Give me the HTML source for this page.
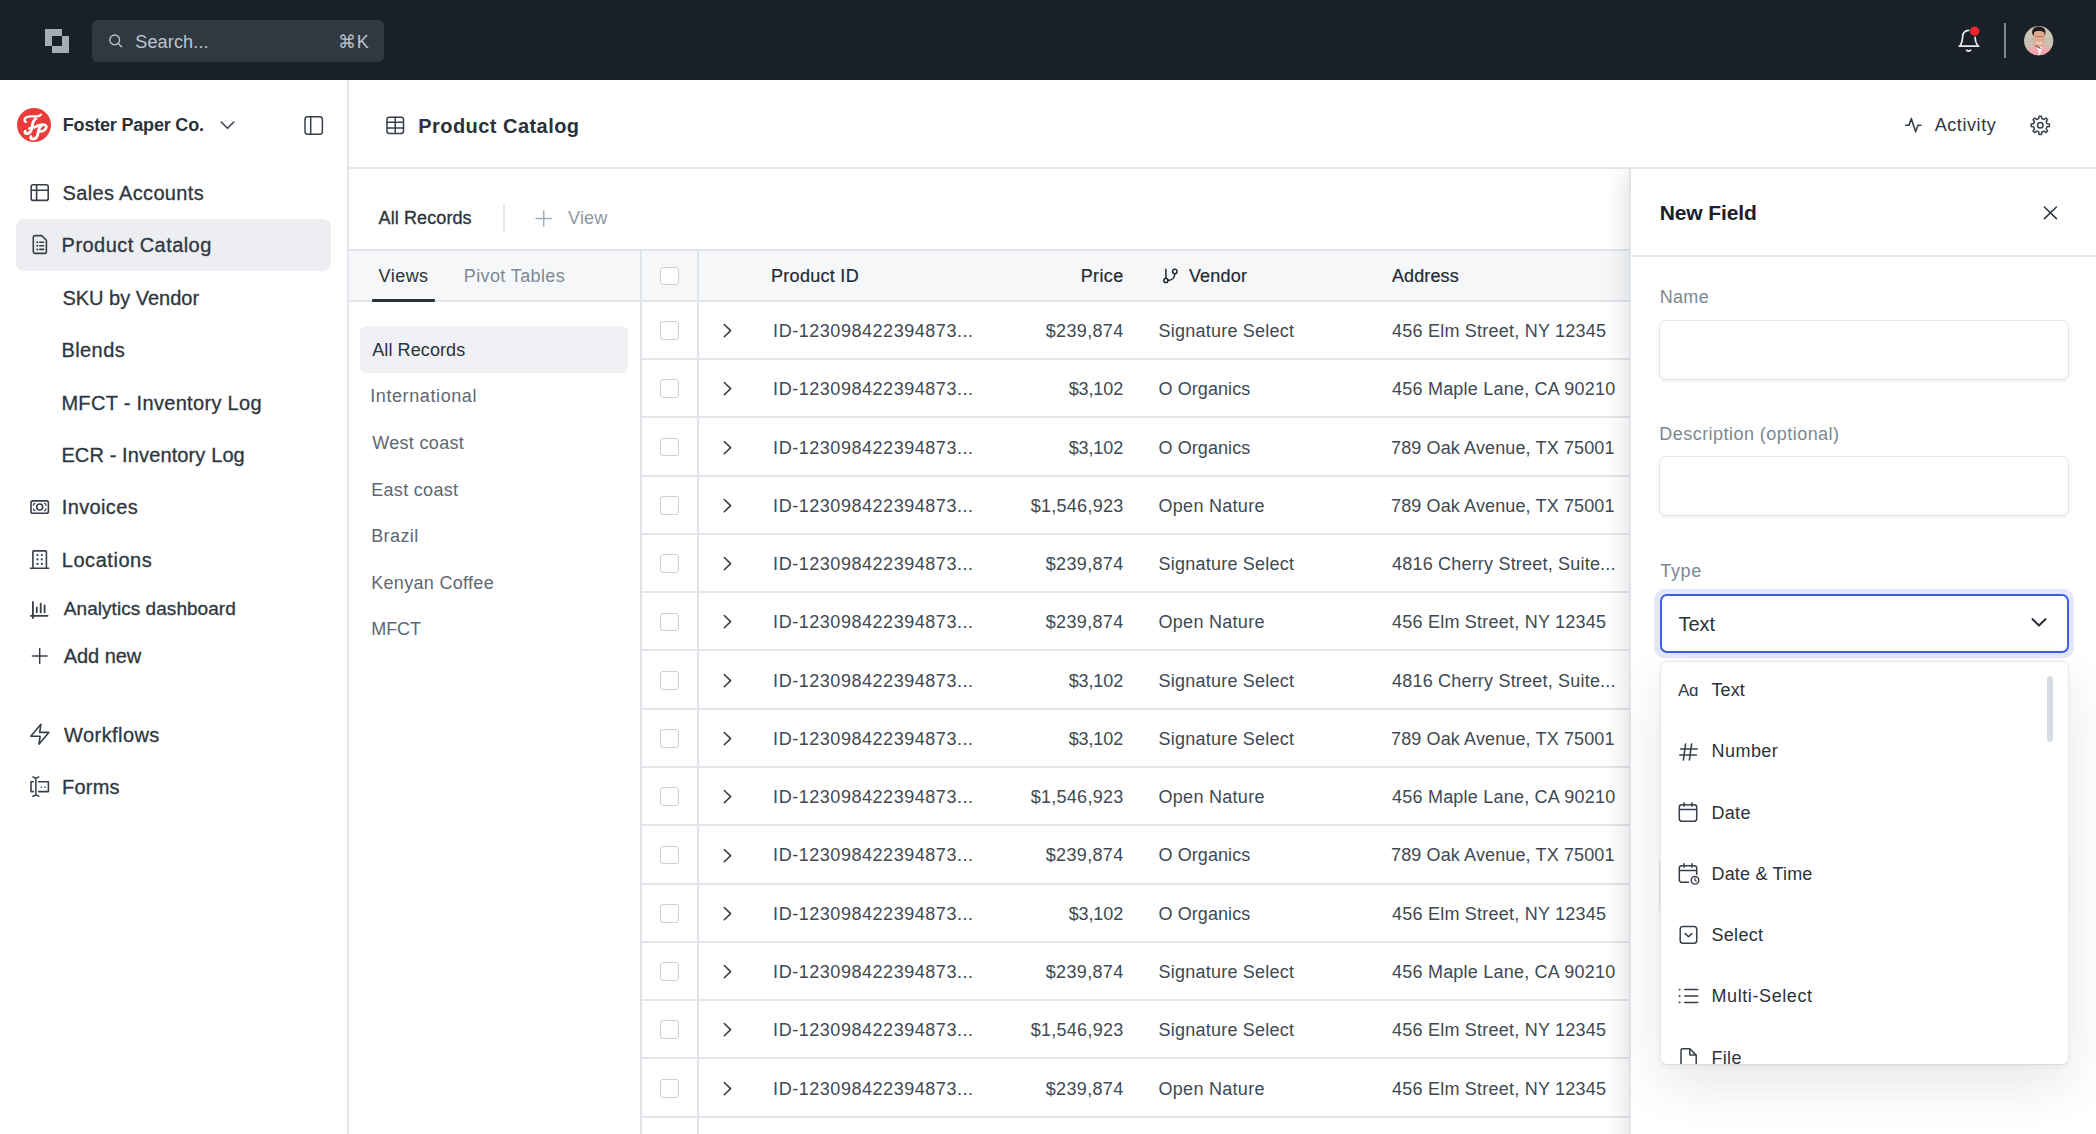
<!DOCTYPE html>
<html><head><meta charset="utf-8"><title>Product Catalog</title>
<style>
html,body{margin:0;padding:0;}
body{width:2096px;height:1134px;overflow:hidden;position:relative;background:#fff;font-family:"Liberation Sans", sans-serif;}
.t{position:absolute;line-height:1;white-space:nowrap;}
.b{position:absolute;}
svg{position:absolute;overflow:visible;}
</style></head><body>
<div class="b" style="left:0.00px;top:0.00px;width:2096.00px;height:80.00px;background:#1a2027;"></div>
<svg style="left:45px;top:29px;" width="24" height="24" viewBox="0 0 24 24" fill="none"><path fill="#a3adb8" fill-rule="evenodd" d="M0 0H17V17H0Z M7 7H24V24H7Z"/></svg>
<div class="b" style="left:92.00px;top:20.00px;width:292.00px;height:42.00px;background:#303942;border-radius:6px;"></div>
<svg style="left:107px;top:32px;" width="18" height="18" viewBox="0 0 18 18" fill="none"><circle cx="7.7" cy="7.9" r="4.9" stroke="#b6c0ca" stroke-width="1.4"/><path d="M11.3 11.5L14.6 14.8" stroke="#b6c0ca" stroke-width="1.4" stroke-linecap="round"/></svg>
<div class="t" style="top:32.66px;font-size:18px;color:#bcc4cc;letter-spacing:0.15px;left:135.30px;">Search...</div>
<div class="t" style="top:33.06px;font-size:18px;color:#bcc4cc;letter-spacing:0.5px;right:1726.80px;">&#8984;K</div>
<svg style="left:1956px;top:27px;" width="26" height="28" viewBox="0 0 26 28" fill="none"><path d="M3.2 19.1H22.7M4.2 19C5.8 16 6.6 13 6.7 9.5C6.9 5.8 9.3 3.6 12.7 3.4M19 10.3C19.1 13.5 20 16.5 21.9 19" stroke="#e6e9ec" stroke-width="1.7" stroke-linecap="round" stroke-linejoin="round"/><path d="M10.5 23.2Q12.6 25.2 14.7 23.2" stroke="#e6e9ec" stroke-width="1.6" stroke-linecap="round"/><circle cx="18.7" cy="4.3" r="4.7" fill="#ea2530"/></svg>
<div class="b" style="left:2003.50px;top:23.00px;width:2.00px;height:35.00px;background:#7d8894;"></div>
<svg style="left:2024px;top:26px;" width="30" height="30" viewBox="0 0 30 30" fill="none"><defs><clipPath id="av"><circle cx="14.7" cy="14.7" r="14.6"/></clipPath></defs><g clip-path="url(#av)"><rect width="30" height="30" fill="#cdc6b8"/><path d="M0 13H30M0 16H30M0 19H30M0 22H30" stroke="#bab3a5" stroke-width="0.7"/><path d="M8 7C8 2 12 0 15.5 0.5C19.5 1 22 3 21.5 7.5L20.5 10L9.5 10Z" fill="#221d1a"/><path d="M10 6.5C12 4.5 18.5 4.5 20.5 7L20.8 14C20.5 19 17.5 21.5 15 21.5C12.5 21.5 9.6 19 9.4 14Z" fill="#e2aa93"/><path d="M11 10.5H19.5" stroke="#9a6e62" stroke-width="0.8"/><path d="M12.5 16.5Q15 18.5 17.5 16.5" stroke="#f4f1ee" stroke-width="1.1" stroke-linecap="round"/><path d="M1 31C2 24 7 20.5 11.5 19.5L15 23L19 19.5C24 20.5 28.5 24 29.5 31Z" fill="#f2a6ad"/><path d="M13 21.5L15.5 30L18.5 21Z" fill="#eef1f0"/><path d="M11.5 19.5L16.5 22.5" stroke="#7a2e2e" stroke-width="1"/></g></svg>
<div class="b" style="left:347.00px;top:80.00px;width:2.00px;height:1054.00px;background:#e3e7ed;"></div>
<div class="b" style="left:17px;top:108px;width:34px;height:34px;border-radius:50%;background:#eb3c3c;"></div>
<svg style="left:17px;top:108px;" width="34" height="34" viewBox="0 0 34 34" fill="none"><g stroke="#fff" stroke-linecap="round" stroke-linejoin="round" fill="none"><path d="M8.8 13.8C6.6 13 7.2 9.2 11.6 8.6C15 8.1 18.3 8.9 21.5 8.1C22.6 7.8 23.4 7.3 24 6.6" stroke-width="2.3"/><path d="M18.8 10.8C16.6 11.9 15.6 15.6 15.1 18.8C14.6 22.2 13.4 25.2 10.4 25.6C8.4 25.8 7.3 24.6 8.3 23.2" stroke-width="2.9"/><path d="M12 20.4L15.8 19.6" stroke-width="2.2"/><path d="M24.6 17.6C22.2 18.6 21.6 21.9 21.1 25C20.6 28.6 19.2 31 15.8 31.1C13.9 31.2 13.2 29.8 14.1 28.6" stroke-width="2.9"/><path d="M17.6 19.4C21.4 16.8 27 15.4 28.9 17.6C30.4 19.8 27.4 24.2 21.8 23.4" stroke-width="2.6"/></g></svg>
<div class="t" style="top:115.76px;font-size:18px;color:#2a323a;font-weight:700;letter-spacing:-0.19px;left:62.80px;">Foster Paper Co.</div>
<svg style="left:219px;top:119px;" width="17" height="12" viewBox="0 0 17 12" fill="none"><path d="M2.2 3L8.5 9.3L14.8 3" stroke="#3a434c" stroke-width="1.6" stroke-linecap="round" stroke-linejoin="round"/></svg>
<svg style="left:302px;top:114px;" width="23" height="23" viewBox="0 0 23 23" fill="none"><rect x="3" y="2.8" width="17.4" height="17.4" rx="2.6" stroke="#37404a" stroke-width="1.5" stroke-linecap="round" stroke-linejoin="round"/><path d="M8.7 2.8V20.2" stroke="#37404a" stroke-width="1.5" stroke-linecap="round" stroke-linejoin="round"/></svg>
<svg style="left:28px;top:181px;" width="24" height="23" viewBox="0 0 24 23" fill="none"><rect x="3.2" y="3.8" width="17" height="15.6" rx="2" stroke="#37404a" stroke-width="1.6" stroke-linecap="round" stroke-linejoin="round"/><path d="M3.2 9.3H20.2M8.6 3.8V19.4" stroke="#37404a" stroke-width="1.6" stroke-linecap="round" stroke-linejoin="round"/></svg>
<div class="b" style="left:16.00px;top:219.00px;width:315.00px;height:52.00px;background:#eceef1;border-radius:8px;"></div>
<svg style="left:30px;top:232px;" width="20" height="25" viewBox="0 0 20 25" fill="none"><path d="M3.3 5.6C3.3 4.5 4.2 3.6 5.3 3.6H11.7L16.4 8.3V19.4C16.4 20.5 15.5 21.4 14.4 21.4H5.3C4.2 21.4 3.3 20.5 3.3 19.4Z" stroke="#37404a" stroke-width="1.6" stroke-linecap="round" stroke-linejoin="round"/><path d="M7.2 10.3h0.1M7.2 13.8h0.1M7.2 17.4h0.1" stroke="#37404a" stroke-width="2" stroke-linecap="round" stroke-linejoin="round"/><path d="M9.8 10.3H13.6M9.8 13.8H13.6M9.8 17.4H13.6" stroke="#37404a" stroke-width="1.6" stroke-linecap="round" stroke-linejoin="round"/></svg>
<div class="t" style="top:183.07px;font-size:20px;color:#2e3740;letter-spacing:0.33px;left:62.60px;-webkit-text-stroke:0.3px #2e3740;">Sales Accounts</div>
<div class="t" style="top:235.37px;font-size:20px;color:#2e3740;letter-spacing:0.45px;left:61.60px;-webkit-text-stroke:0.3px #2e3740;">Product Catalog</div>
<div class="t" style="top:287.77px;font-size:20px;color:#2e3740;left:62.40px;-webkit-text-stroke:0.3px #2e3740;">SKU by Vendor</div>
<div class="t" style="top:340.17px;font-size:20px;color:#2e3740;letter-spacing:0.44px;left:61.40px;-webkit-text-stroke:0.3px #2e3740;">Blends</div>
<div class="t" style="top:392.67px;font-size:20px;color:#2e3740;letter-spacing:0.32px;left:61.40px;-webkit-text-stroke:0.3px #2e3740;">MFCT - Inventory Log</div>
<div class="t" style="top:444.87px;font-size:20px;color:#2e3740;letter-spacing:0.12px;left:61.40px;-webkit-text-stroke:0.3px #2e3740;">ECR - Inventory Log</div>
<div class="t" style="top:497.27px;font-size:20px;color:#2e3740;letter-spacing:0.36px;left:61.80px;-webkit-text-stroke:0.3px #2e3740;">Invoices</div>
<div class="t" style="top:549.97px;font-size:20px;color:#2e3740;letter-spacing:0.54px;left:61.80px;-webkit-text-stroke:0.3px #2e3740;">Locations</div>
<div class="t" style="top:599.22px;font-size:19px;color:#2e3740;letter-spacing:0.05px;left:63.80px;-webkit-text-stroke:0.3px #2e3740;">Analytics dashboard</div>
<div class="t" style="top:645.67px;font-size:20px;color:#2e3740;letter-spacing:-0.07px;left:63.80px;-webkit-text-stroke:0.3px #2e3740;">Add new</div>
<div class="t" style="top:724.87px;font-size:20px;color:#2e3740;letter-spacing:0.42px;left:64.10px;-webkit-text-stroke:0.3px #2e3740;">Workflows</div>
<div class="t" style="top:777.37px;font-size:20px;color:#2e3740;letter-spacing:0.2px;left:62.10px;-webkit-text-stroke:0.3px #2e3740;">Forms</div>
<svg style="left:28px;top:498px;" width="24" height="18" viewBox="0 0 24 18" fill="none"><rect x="3" y="2.9" width="17.4" height="12.3" rx="1.8" stroke="#37404a" stroke-width="1.6" stroke-linecap="round" stroke-linejoin="round"/><circle cx="11.7" cy="9" r="3" stroke="#37404a" stroke-width="1.6" stroke-linecap="round" stroke-linejoin="round"/><path d="M5.4 7.2C5.4 6.4 5.9 5.6 6.8 5.4M18 7.2C18 6.4 17.5 5.6 16.6 5.4M5.4 10.8C5.4 11.6 5.9 12.4 6.8 12.6M18 10.8C18 11.6 17.5 12.4 16.6 12.6" stroke="#37404a" stroke-width="1.3" stroke-linecap="round" stroke-linejoin="round"/></svg>
<svg style="left:28px;top:548px;" width="24" height="23" viewBox="0 0 24 23" fill="none"><path d="M4.9 20.3V3.7C4.9 3.2 5.2 2.9 5.7 2.9H17.6C18.1 2.9 18.4 3.2 18.4 3.7V20.3M2.4 20.3H20.7" stroke="#37404a" stroke-width="1.6" stroke-linecap="round" stroke-linejoin="round"/><path d="M9.4 7h0.05M13.8 7h0.05M9.4 11.4h0.05M13.8 11.4h0.05M9.4 15.9h0.05M13.8 15.9h0.05" stroke="#37404a" stroke-width="2.1" stroke-linecap="round" stroke-linejoin="round"/></svg>
<svg style="left:28px;top:600px;" width="24" height="21" viewBox="0 0 24 21" fill="none"><path d="M4.9 1.9V18M2.7 15.8H19.6M8.8 7.5V12.3M12.7 3.6V12.4M16.6 5.5V12.4" stroke="#37404a" stroke-width="1.8" stroke-linecap="round" stroke-linejoin="round"/></svg>
<svg style="left:30px;top:646px;" width="20" height="20" viewBox="0 0 20 20" fill="none"><path d="M9.7 2.6V17.4M2.3 10H17.1" stroke="#37404a" stroke-width="1.5" stroke-linecap="round"/></svg>
<svg style="left:28px;top:722px;" width="24" height="25" viewBox="0 0 24 25" fill="none"><path d="M12.9 2.3L2.8 14.3H12.1L10.9 22.2L20.8 10.4H11.7Z" stroke="#37404a" stroke-width="1.6" stroke-linecap="round" stroke-linejoin="round"/></svg>
<svg style="left:28px;top:774px;" width="24" height="25" viewBox="0 0 24 25" fill="none"><path d="M5.2 7.8H3V17.6H5.2M10.6 7.8H20.4V17.6H10.6" stroke="#37404a" stroke-width="1.6" stroke-linecap="round" stroke-linejoin="round"/><path d="M7.85 4.3V20.8M4.8 2.9C6 3.3 7 4 7.85 4.3C8.7 4 9.7 3.3 10.8 2.9M4.8 22.3C6 21.9 7 21.2 7.85 20.8C8.7 21.2 9.7 21.9 10.8 22.3" stroke="#37404a" stroke-width="1.5" stroke-linecap="round" stroke-linejoin="round"/><path d="M13.3 13.3h0.05M17 13.3h0.05" stroke="#37404a" stroke-width="1.6" stroke-linecap="round" stroke-linejoin="round"/></svg>
<div class="b" style="left:349.00px;top:167.30px;width:1747.00px;height:2.00px;background:#e2e6eb;"></div>
<svg style="left:384px;top:114px;" width="22" height="22" viewBox="0 0 22 22" fill="none"><rect x="3" y="3.2" width="16.5" height="16.2" rx="2.2" stroke="#37404a" stroke-width="1.5" stroke-linecap="round" stroke-linejoin="round"/><path d="M3 8.2H19.5M3 13.9H19.5M11.2 3.2V19.4" stroke="#37404a" stroke-width="1.5" stroke-linecap="round" stroke-linejoin="round"/></svg>
<div class="t" style="top:115.57px;font-size:20px;color:#2a323a;font-weight:700;letter-spacing:0.46px;left:418.20px;">Product Catalog</div>
<svg style="left:1903px;top:116px;" width="22" height="19" viewBox="0 0 22 19" fill="none"><path d="M2.7 9.3H6L8.3 2.5L12.6 15.8L15 9.3H18" stroke="#37404a" stroke-width="1.6" stroke-linecap="round" stroke-linejoin="round"/></svg>
<div class="t" style="top:116.36px;font-size:18px;color:#2e3740;letter-spacing:0.58px;left:1934.70px;">Activity</div>
<svg style="left:2028px;top:113px;" width="24" height="24" viewBox="0 0 24 24" fill="none"><path d="M19.03 10.79 L21.42 11.11 L21.42 13.49 L19.03 13.81 L18.13 16.00 L19.59 17.91 L17.91 19.59 L16.00 18.13 L13.81 19.03 L13.49 21.42 L11.11 21.42 L10.79 19.03 L8.60 18.13 L6.69 19.59 L5.01 17.91 L6.47 16.00 L5.57 13.81 L3.18 13.49 L3.18 11.11 L5.57 10.79 L6.47 8.60 L5.01 6.69 L6.69 5.01 L8.60 6.47 L10.79 5.57 L11.11 3.18 L13.49 3.18 L13.81 5.57 L16.00 6.47 L17.91 5.01 L19.59 6.69 L18.13 8.60Z" stroke="#37404a" stroke-width="1.5" stroke-linecap="round" stroke-linejoin="round"/><circle cx="12.3" cy="12.3" r="2.8" stroke="#37404a" stroke-width="1.5" stroke-linecap="round" stroke-linejoin="round"/></svg>
<div class="b" style="left:349.00px;top:249.00px;width:1747.00px;height:2.00px;background:#e2e6eb;"></div>
<div class="t" style="top:209.16px;font-size:18px;color:#2a323a;letter-spacing:0.1px;left:378.60px;-webkit-text-stroke:0.3px #2a323a;">All Records</div>
<div class="b" style="left:503.00px;top:204.00px;width:2.00px;height:29.00px;background:#e3e7eb;"></div>
<svg style="left:534px;top:209px;" width="20" height="20" viewBox="0 0 20 20" fill="none"><path d="M9.7 2V17.2M2 9.6H17.4" stroke="#a3aeb8" stroke-width="1.5" stroke-linecap="round"/></svg>
<div class="t" style="top:209.16px;font-size:18px;color:#8c98a4;letter-spacing:0.2px;left:568.00px;">View</div>
<div class="b" style="left:349.00px;top:251.00px;width:291.00px;height:49.00px;background:#f6f7f9;"></div>
<div class="b" style="left:349.00px;top:300.00px;width:291.00px;height:2.00px;background:#e2e6eb;"></div>
<div class="b" style="left:640.00px;top:251.00px;width:1.50px;height:883.00px;background:#dfe3ea;"></div>
<div class="t" style="top:266.86px;font-size:18px;color:#2a323a;letter-spacing:0.45px;left:378.60px;">Views</div>
<div class="b" style="left:372.00px;top:299.00px;width:63.00px;height:3.00px;background:#2a323a;border-radius:1px;"></div>
<div class="t" style="top:266.86px;font-size:18px;color:#7d8a96;letter-spacing:0.38px;left:463.80px;">Pivot Tables</div>
<div class="b" style="left:360.00px;top:326.00px;width:268.40px;height:46.70px;background:#eff1f4;border-radius:6px;"></div>
<div class="t" style="top:341.06px;font-size:18px;color:#2a323a;letter-spacing:0.1px;left:372.20px;">All Records</div>
<div class="t" style="top:387.36px;font-size:18px;color:#5d6873;letter-spacing:0.6px;left:370.20px;">International</div>
<div class="t" style="top:434.26px;font-size:18px;color:#5d6873;letter-spacing:0.33px;left:372.20px;">West coast</div>
<div class="t" style="top:480.56px;font-size:18px;color:#5d6873;letter-spacing:0.31px;left:371.20px;">East coast</div>
<div class="t" style="top:526.76px;font-size:18px;color:#5d6873;letter-spacing:0.4px;left:371.20px;">Brazil</div>
<div class="t" style="top:574.06px;font-size:18px;color:#5d6873;letter-spacing:0.31px;left:371.20px;">Kenyan Coffee</div>
<div class="t" style="top:620.36px;font-size:18px;color:#5d6873;letter-spacing:-0.05px;left:371.20px;">MFCT</div>
<div class="b" style="left:641.50px;top:251.00px;width:998.50px;height:49.00px;background:#f6f7f9;"></div>
<div class="b" style="left:697.00px;top:251.00px;width:1.50px;height:883.00px;background:#dfe3ea;"></div>
<div class="b" style="left:659.90px;top:266.60px;width:18.80px;height:18.80px;box-sizing:border-box;border:1.5px solid #c8d0d8;border-radius:3px;background:#fff;"></div>
<div class="t" style="top:266.76px;font-size:18px;color:#232a31;letter-spacing:0.29px;left:771.00px;-webkit-text-stroke:0.2px #232a31;">Product ID</div>
<div class="t" style="top:266.76px;font-size:18px;color:#232a31;letter-spacing:0.37px;right:972.40px;-webkit-text-stroke:0.2px #232a31;">Price</div>
<svg style="left:1161px;top:267px;" width="19" height="18" viewBox="0 0 19 18" fill="none"><circle cx="4.9" cy="13.5" r="2.1" stroke="#232a31" stroke-width="1.5"/><circle cx="13.8" cy="4.5" r="2.2" stroke="#232a31" stroke-width="1.5"/><path d="M4.9 2.2V11.2M13.8 6.8C13.8 10.5 11 13.3 7.1 13.5" stroke="#232a31" stroke-width="1.5" stroke-linecap="round"/></svg>
<div class="t" style="top:266.76px;font-size:18px;color:#232a31;letter-spacing:0.2px;left:1188.90px;-webkit-text-stroke:0.2px #232a31;">Vendor</div>
<div class="t" style="top:266.76px;font-size:18px;color:#232a31;letter-spacing:0.1px;left:1392.00px;-webkit-text-stroke:0.2px #232a31;">Address</div>
<div class="b" style="left:641.50px;top:300.00px;width:998.50px;height:2.00px;background:#e2e6eb;"></div>
<div class="b" style="left:641.50px;top:358.00px;width:998.50px;height:2.00px;background:#e2e6eb;"></div>
<div class="b" style="left:659.90px;top:321.10px;width:18.80px;height:18.80px;box-sizing:border-box;border:1.5px solid #c8d0d8;border-radius:3px;background:#fff;"></div>
<svg style="left:720px;top:321.0px;" width="14" height="19" viewBox="0 0 14 19" fill="none"><path d="M4.3 3.5L10.6 9.6L4.3 15.7" stroke="#36404a" stroke-width="1.6" stroke-linecap="round" stroke-linejoin="round"/></svg>
<div class="t" style="top:321.96px;font-size:18px;color:#404952;letter-spacing:0.54px;left:773.10px;">ID-123098422394873...</div>
<div class="t" style="top:321.96px;font-size:18px;color:#404952;letter-spacing:0.34px;right:972.46px;">$239,874</div>
<div class="t" style="top:321.96px;font-size:18px;color:#404952;letter-spacing:0.23px;left:1158.50px;">Signature Select</div>
<div class="t" style="top:321.96px;font-size:18px;color:#404952;letter-spacing:0.23px;left:1392.00px;">456 Elm Street, NY 12345</div>
<div class="b" style="left:641.50px;top:416.28px;width:998.50px;height:2.00px;background:#e2e6eb;"></div>
<div class="b" style="left:659.90px;top:379.38px;width:18.80px;height:18.80px;box-sizing:border-box;border:1.5px solid #c8d0d8;border-radius:3px;background:#fff;"></div>
<svg style="left:720px;top:379.28px;" width="14" height="19" viewBox="0 0 14 19" fill="none"><path d="M4.3 3.5L10.6 9.6L4.3 15.7" stroke="#36404a" stroke-width="1.6" stroke-linecap="round" stroke-linejoin="round"/></svg>
<div class="t" style="top:380.24px;font-size:18px;color:#404952;letter-spacing:0.54px;left:773.10px;">ID-123098422394873...</div>
<div class="t" style="top:380.24px;font-size:18px;color:#404952;letter-spacing:-0.1px;right:972.90px;">$3,102</div>
<div class="t" style="top:380.24px;font-size:18px;color:#404952;letter-spacing:0.08px;left:1158.50px;">O Organics</div>
<div class="t" style="top:380.24px;font-size:18px;color:#404952;letter-spacing:0.22px;left:1392.00px;">456 Maple Lane, CA 90210</div>
<div class="b" style="left:641.50px;top:474.56px;width:998.50px;height:2.00px;background:#e2e6eb;"></div>
<div class="b" style="left:659.90px;top:437.66px;width:18.80px;height:18.80px;box-sizing:border-box;border:1.5px solid #c8d0d8;border-radius:3px;background:#fff;"></div>
<svg style="left:720px;top:437.56px;" width="14" height="19" viewBox="0 0 14 19" fill="none"><path d="M4.3 3.5L10.6 9.6L4.3 15.7" stroke="#36404a" stroke-width="1.6" stroke-linecap="round" stroke-linejoin="round"/></svg>
<div class="t" style="top:438.52px;font-size:18px;color:#404952;letter-spacing:0.54px;left:773.10px;">ID-123098422394873...</div>
<div class="t" style="top:438.52px;font-size:18px;color:#404952;letter-spacing:-0.1px;right:972.90px;">$3,102</div>
<div class="t" style="top:438.52px;font-size:18px;color:#404952;letter-spacing:0.08px;left:1158.50px;">O Organics</div>
<div class="t" style="top:438.52px;font-size:18px;color:#404952;letter-spacing:0.13px;left:1391.00px;">789 Oak Avenue, TX 75001</div>
<div class="b" style="left:641.50px;top:532.84px;width:998.50px;height:2.00px;background:#e2e6eb;"></div>
<div class="b" style="left:659.90px;top:495.94px;width:18.80px;height:18.80px;box-sizing:border-box;border:1.5px solid #c8d0d8;border-radius:3px;background:#fff;"></div>
<svg style="left:720px;top:495.84000000000003px;" width="14" height="19" viewBox="0 0 14 19" fill="none"><path d="M4.3 3.5L10.6 9.6L4.3 15.7" stroke="#36404a" stroke-width="1.6" stroke-linecap="round" stroke-linejoin="round"/></svg>
<div class="t" style="top:496.80px;font-size:18px;color:#404952;letter-spacing:0.54px;left:773.10px;">ID-123098422394873...</div>
<div class="t" style="top:496.80px;font-size:18px;color:#404952;letter-spacing:0.26px;right:972.54px;">$1,546,923</div>
<div class="t" style="top:496.80px;font-size:18px;color:#404952;letter-spacing:0.29px;left:1158.50px;">Open Nature</div>
<div class="t" style="top:496.80px;font-size:18px;color:#404952;letter-spacing:0.13px;left:1391.00px;">789 Oak Avenue, TX 75001</div>
<div class="b" style="left:641.50px;top:591.12px;width:998.50px;height:2.00px;background:#e2e6eb;"></div>
<div class="b" style="left:659.90px;top:554.22px;width:18.80px;height:18.80px;box-sizing:border-box;border:1.5px solid #c8d0d8;border-radius:3px;background:#fff;"></div>
<svg style="left:720px;top:554.12px;" width="14" height="19" viewBox="0 0 14 19" fill="none"><path d="M4.3 3.5L10.6 9.6L4.3 15.7" stroke="#36404a" stroke-width="1.6" stroke-linecap="round" stroke-linejoin="round"/></svg>
<div class="t" style="top:555.08px;font-size:18px;color:#404952;letter-spacing:0.54px;left:773.10px;">ID-123098422394873...</div>
<div class="t" style="top:555.08px;font-size:18px;color:#404952;letter-spacing:0.34px;right:972.46px;">$239,874</div>
<div class="t" style="top:555.08px;font-size:18px;color:#404952;letter-spacing:0.23px;left:1158.50px;">Signature Select</div>
<div class="t" style="top:555.08px;font-size:18px;color:#404952;letter-spacing:0.2px;left:1392.00px;">4816 Cherry Street, Suite...</div>
<div class="b" style="left:641.50px;top:649.40px;width:998.50px;height:2.00px;background:#e2e6eb;"></div>
<div class="b" style="left:659.90px;top:612.50px;width:18.80px;height:18.80px;box-sizing:border-box;border:1.5px solid #c8d0d8;border-radius:3px;background:#fff;"></div>
<svg style="left:720px;top:612.4px;" width="14" height="19" viewBox="0 0 14 19" fill="none"><path d="M4.3 3.5L10.6 9.6L4.3 15.7" stroke="#36404a" stroke-width="1.6" stroke-linecap="round" stroke-linejoin="round"/></svg>
<div class="t" style="top:613.36px;font-size:18px;color:#404952;letter-spacing:0.54px;left:773.10px;">ID-123098422394873...</div>
<div class="t" style="top:613.36px;font-size:18px;color:#404952;letter-spacing:0.34px;right:972.46px;">$239,874</div>
<div class="t" style="top:613.36px;font-size:18px;color:#404952;letter-spacing:0.29px;left:1158.50px;">Open Nature</div>
<div class="t" style="top:613.36px;font-size:18px;color:#404952;letter-spacing:0.23px;left:1392.00px;">456 Elm Street, NY 12345</div>
<div class="b" style="left:641.50px;top:707.68px;width:998.50px;height:2.00px;background:#e2e6eb;"></div>
<div class="b" style="left:659.90px;top:670.78px;width:18.80px;height:18.80px;box-sizing:border-box;border:1.5px solid #c8d0d8;border-radius:3px;background:#fff;"></div>
<svg style="left:720px;top:670.6800000000001px;" width="14" height="19" viewBox="0 0 14 19" fill="none"><path d="M4.3 3.5L10.6 9.6L4.3 15.7" stroke="#36404a" stroke-width="1.6" stroke-linecap="round" stroke-linejoin="round"/></svg>
<div class="t" style="top:671.64px;font-size:18px;color:#404952;letter-spacing:0.54px;left:773.10px;">ID-123098422394873...</div>
<div class="t" style="top:671.64px;font-size:18px;color:#404952;letter-spacing:-0.1px;right:972.90px;">$3,102</div>
<div class="t" style="top:671.64px;font-size:18px;color:#404952;letter-spacing:0.23px;left:1158.50px;">Signature Select</div>
<div class="t" style="top:671.64px;font-size:18px;color:#404952;letter-spacing:0.2px;left:1392.00px;">4816 Cherry Street, Suite...</div>
<div class="b" style="left:641.50px;top:765.96px;width:998.50px;height:2.00px;background:#e2e6eb;"></div>
<div class="b" style="left:659.90px;top:729.06px;width:18.80px;height:18.80px;box-sizing:border-box;border:1.5px solid #c8d0d8;border-radius:3px;background:#fff;"></div>
<svg style="left:720px;top:728.96px;" width="14" height="19" viewBox="0 0 14 19" fill="none"><path d="M4.3 3.5L10.6 9.6L4.3 15.7" stroke="#36404a" stroke-width="1.6" stroke-linecap="round" stroke-linejoin="round"/></svg>
<div class="t" style="top:729.92px;font-size:18px;color:#404952;letter-spacing:0.54px;left:773.10px;">ID-123098422394873...</div>
<div class="t" style="top:729.92px;font-size:18px;color:#404952;letter-spacing:-0.1px;right:972.90px;">$3,102</div>
<div class="t" style="top:729.92px;font-size:18px;color:#404952;letter-spacing:0.23px;left:1158.50px;">Signature Select</div>
<div class="t" style="top:729.92px;font-size:18px;color:#404952;letter-spacing:0.13px;left:1391.00px;">789 Oak Avenue, TX 75001</div>
<div class="b" style="left:641.50px;top:824.24px;width:998.50px;height:2.00px;background:#e2e6eb;"></div>
<div class="b" style="left:659.90px;top:787.34px;width:18.80px;height:18.80px;box-sizing:border-box;border:1.5px solid #c8d0d8;border-radius:3px;background:#fff;"></div>
<svg style="left:720px;top:787.24px;" width="14" height="19" viewBox="0 0 14 19" fill="none"><path d="M4.3 3.5L10.6 9.6L4.3 15.7" stroke="#36404a" stroke-width="1.6" stroke-linecap="round" stroke-linejoin="round"/></svg>
<div class="t" style="top:788.20px;font-size:18px;color:#404952;letter-spacing:0.54px;left:773.10px;">ID-123098422394873...</div>
<div class="t" style="top:788.20px;font-size:18px;color:#404952;letter-spacing:0.26px;right:972.54px;">$1,546,923</div>
<div class="t" style="top:788.20px;font-size:18px;color:#404952;letter-spacing:0.29px;left:1158.50px;">Open Nature</div>
<div class="t" style="top:788.20px;font-size:18px;color:#404952;letter-spacing:0.22px;left:1392.00px;">456 Maple Lane, CA 90210</div>
<div class="b" style="left:641.50px;top:882.52px;width:998.50px;height:2.00px;background:#e2e6eb;"></div>
<div class="b" style="left:659.90px;top:845.62px;width:18.80px;height:18.80px;box-sizing:border-box;border:1.5px solid #c8d0d8;border-radius:3px;background:#fff;"></div>
<svg style="left:720px;top:845.52px;" width="14" height="19" viewBox="0 0 14 19" fill="none"><path d="M4.3 3.5L10.6 9.6L4.3 15.7" stroke="#36404a" stroke-width="1.6" stroke-linecap="round" stroke-linejoin="round"/></svg>
<div class="t" style="top:846.48px;font-size:18px;color:#404952;letter-spacing:0.54px;left:773.10px;">ID-123098422394873...</div>
<div class="t" style="top:846.48px;font-size:18px;color:#404952;letter-spacing:0.34px;right:972.46px;">$239,874</div>
<div class="t" style="top:846.48px;font-size:18px;color:#404952;letter-spacing:0.08px;left:1158.50px;">O Organics</div>
<div class="t" style="top:846.48px;font-size:18px;color:#404952;letter-spacing:0.13px;left:1391.00px;">789 Oak Avenue, TX 75001</div>
<div class="b" style="left:641.50px;top:940.80px;width:998.50px;height:2.00px;background:#e2e6eb;"></div>
<div class="b" style="left:659.90px;top:903.90px;width:18.80px;height:18.80px;box-sizing:border-box;border:1.5px solid #c8d0d8;border-radius:3px;background:#fff;"></div>
<svg style="left:720px;top:903.8px;" width="14" height="19" viewBox="0 0 14 19" fill="none"><path d="M4.3 3.5L10.6 9.6L4.3 15.7" stroke="#36404a" stroke-width="1.6" stroke-linecap="round" stroke-linejoin="round"/></svg>
<div class="t" style="top:904.76px;font-size:18px;color:#404952;letter-spacing:0.54px;left:773.10px;">ID-123098422394873...</div>
<div class="t" style="top:904.76px;font-size:18px;color:#404952;letter-spacing:-0.1px;right:972.90px;">$3,102</div>
<div class="t" style="top:904.76px;font-size:18px;color:#404952;letter-spacing:0.08px;left:1158.50px;">O Organics</div>
<div class="t" style="top:904.76px;font-size:18px;color:#404952;letter-spacing:0.23px;left:1392.00px;">456 Elm Street, NY 12345</div>
<div class="b" style="left:641.50px;top:999.08px;width:998.50px;height:2.00px;background:#e2e6eb;"></div>
<div class="b" style="left:659.90px;top:962.18px;width:18.80px;height:18.80px;box-sizing:border-box;border:1.5px solid #c8d0d8;border-radius:3px;background:#fff;"></div>
<svg style="left:720px;top:962.08px;" width="14" height="19" viewBox="0 0 14 19" fill="none"><path d="M4.3 3.5L10.6 9.6L4.3 15.7" stroke="#36404a" stroke-width="1.6" stroke-linecap="round" stroke-linejoin="round"/></svg>
<div class="t" style="top:963.04px;font-size:18px;color:#404952;letter-spacing:0.54px;left:773.10px;">ID-123098422394873...</div>
<div class="t" style="top:963.04px;font-size:18px;color:#404952;letter-spacing:0.34px;right:972.46px;">$239,874</div>
<div class="t" style="top:963.04px;font-size:18px;color:#404952;letter-spacing:0.23px;left:1158.50px;">Signature Select</div>
<div class="t" style="top:963.04px;font-size:18px;color:#404952;letter-spacing:0.22px;left:1392.00px;">456 Maple Lane, CA 90210</div>
<div class="b" style="left:641.50px;top:1057.36px;width:998.50px;height:2.00px;background:#e2e6eb;"></div>
<div class="b" style="left:659.90px;top:1020.46px;width:18.80px;height:18.80px;box-sizing:border-box;border:1.5px solid #c8d0d8;border-radius:3px;background:#fff;"></div>
<svg style="left:720px;top:1020.36px;" width="14" height="19" viewBox="0 0 14 19" fill="none"><path d="M4.3 3.5L10.6 9.6L4.3 15.7" stroke="#36404a" stroke-width="1.6" stroke-linecap="round" stroke-linejoin="round"/></svg>
<div class="t" style="top:1021.32px;font-size:18px;color:#404952;letter-spacing:0.54px;left:773.10px;">ID-123098422394873...</div>
<div class="t" style="top:1021.32px;font-size:18px;color:#404952;letter-spacing:0.26px;right:972.54px;">$1,546,923</div>
<div class="t" style="top:1021.32px;font-size:18px;color:#404952;letter-spacing:0.23px;left:1158.50px;">Signature Select</div>
<div class="t" style="top:1021.32px;font-size:18px;color:#404952;letter-spacing:0.23px;left:1392.00px;">456 Elm Street, NY 12345</div>
<div class="b" style="left:641.50px;top:1115.64px;width:998.50px;height:2.00px;background:#e2e6eb;"></div>
<div class="b" style="left:659.90px;top:1078.74px;width:18.80px;height:18.80px;box-sizing:border-box;border:1.5px solid #c8d0d8;border-radius:3px;background:#fff;"></div>
<svg style="left:720px;top:1078.6399999999999px;" width="14" height="19" viewBox="0 0 14 19" fill="none"><path d="M4.3 3.5L10.6 9.6L4.3 15.7" stroke="#36404a" stroke-width="1.6" stroke-linecap="round" stroke-linejoin="round"/></svg>
<div class="t" style="top:1079.60px;font-size:18px;color:#404952;letter-spacing:0.54px;left:773.10px;">ID-123098422394873...</div>
<div class="t" style="top:1079.60px;font-size:18px;color:#404952;letter-spacing:0.34px;right:972.46px;">$239,874</div>
<div class="t" style="top:1079.60px;font-size:18px;color:#404952;letter-spacing:0.29px;left:1158.50px;">Open Nature</div>
<div class="t" style="top:1079.60px;font-size:18px;color:#404952;letter-spacing:0.23px;left:1392.00px;">456 Elm Street, NY 12345</div>
<div class="b" style="left:1560px;top:169.3px;width:536px;height:964.7px;overflow:hidden;"><div class="b" style="left:70px;top:0;width:466px;height:1000px;background:#fff;box-shadow:-6px 4px 20px rgba(30,40,50,0.12);"></div></div>
<div class="b" style="left:1629.30px;top:169.30px;width:1.50px;height:964.70px;background:#dfe3ea;"></div>
<div class="t" style="top:201.82px;font-size:21px;color:#1a2128;font-weight:700;letter-spacing:-0.12px;left:1659.70px;">New Field</div>
<svg style="left:2040px;top:202px;" width="22" height="22" viewBox="0 0 22 22" fill="none"><path d="M4.4 5L16.4 16.6M16.4 5L4.4 16.6" stroke="#2f3841" stroke-width="1.6" stroke-linecap="round"/></svg>
<div class="b" style="left:1631.50px;top:255.00px;width:464.50px;height:2.00px;background:#e2e6eb;"></div>
<div class="t" style="top:287.56px;font-size:18px;color:#7a8894;letter-spacing:0.33px;left:1659.70px;">Name</div>
<div class="b" style="left:1659.00px;top:319.50px;width:410.00px;height:60.00px;box-sizing:border-box;border:1.6px solid #e2e5e9;border-radius:7px;background:#fff;box-shadow:0 1.5px 2px rgba(0,0,0,0.05);"></div>
<div class="t" style="top:424.86px;font-size:18px;color:#7a8894;letter-spacing:0.46px;left:1659.30px;">Description (optional)</div>
<div class="b" style="left:1659.00px;top:456.40px;width:410.00px;height:59.90px;box-sizing:border-box;border:1.6px solid #e2e5e9;border-radius:7px;background:#fff;box-shadow:0 1.5px 2px rgba(0,0,0,0.05);"></div>
<div class="t" style="top:561.96px;font-size:18px;color:#7a8894;letter-spacing:0.66px;left:1660.30px;">Type</div>
<div class="b" style="left:1654.00px;top:588.50px;width:420.00px;height:69.70px;border-radius:11px;background:#e2e7fb;"></div>
<div class="b" style="left:1659.50px;top:594.00px;width:409.10px;height:59.00px;box-sizing:border-box;border:2.5px solid #3e60e0;border-radius:7px;background:#fff;"></div>
<div class="t" style="top:614.47px;font-size:20px;color:#2a323a;left:1678.40px;">Text</div>
<svg style="left:2029px;top:614px;" width="20" height="18" viewBox="0 0 20 18" fill="none"><path d="M3.6 5.2L10 11.5L16.4 5.2" stroke="#2a323a" stroke-width="2.1" stroke-linecap="round" stroke-linejoin="round"/></svg>
<div class="b" style="left:1659.00px;top:855.00px;width:410.00px;height:60.00px;box-sizing:border-box;border:1.6px solid #e2e5e9;border-radius:7px;background:#fff;box-shadow:0 1.5px 2px rgba(0,0,0,0.05);"></div>
<div class="b" style="left:1659.5px;top:661px;width:409.1px;height:404px;box-sizing:border-box;border:1.5px solid #e6e9ed;border-bottom-color:#d9dde2;border-radius:7px;background:#fff;box-shadow:0 20px 50px rgba(20,30,40,0.10),0 2px 4px rgba(20,30,40,0.04);overflow:hidden;"><div class="b" style="left:386.50px;top:14.00px;width:5.50px;height:65.50px;background:#d7dce2;border-radius:3px;"></div><div class="t" style="top:19.06px;font-size:18px;color:#2a323a;letter-spacing:0.1px;left:51.00px;">Text</div><div class="t" style="top:80.46px;font-size:18px;color:#2a323a;letter-spacing:0.46px;left:51.00px;">Number</div><div class="t" style="top:141.66px;font-size:18px;color:#2a323a;letter-spacing:0.3px;left:51.00px;">Date</div><div class="t" style="top:202.86px;font-size:18px;color:#2a323a;letter-spacing:0.18px;left:51.00px;">Date &amp; Time</div><div class="t" style="top:264.16px;font-size:18px;color:#2a323a;letter-spacing:0.3px;left:51.00px;">Select</div><div class="t" style="top:325.36px;font-size:18px;color:#2a323a;letter-spacing:0.59px;left:51.00px;">Multi-Select</div><div class="t" style="top:386.56px;font-size:18px;color:#2a323a;letter-spacing:0.3px;left:51.00px;">File</div><div class="t" style="top:19.91px;font-size:17px;color:#36404a;letter-spacing:-0.3px;left:17.40px;">A&#593;</div><svg style="left:16px;top:78.5px;" width="24" height="22" viewBox="0 0 24 22" fill="none"><path d="M8.6 3L6.4 19M14.6 3L12.4 19M3.6 8H20.2M2.8 14H19.4" stroke="#36404a" stroke-width="1.6" stroke-linecap="round"/></svg><svg style="left:15px;top:137.5px;" width="24" height="24" viewBox="0 0 24 24" fill="none"><rect x="3.3" y="4.8" width="17.4" height="16.4" rx="2.4" stroke="#36404a" stroke-width="1.5"/><path d="M3.3 9.6H20.7M8 2.8V6.2M16 2.8V6.2" stroke="#36404a" stroke-width="1.5" stroke-linecap="round"/></svg><svg style="left:15px;top:198.5px;" width="25" height="25" viewBox="0 0 25 25" fill="none"><path d="M12.6 21.2H5.6C4.3 21.2 3.3 20.2 3.3 18.9V7.1C3.3 5.8 4.3 4.8 5.6 4.8H18.4C19.7 4.8 20.7 5.8 20.7 7.1V13.2M3.3 9.6H20.7M8 2.8V6.2M16 2.8V6.2" stroke="#36404a" stroke-width="1.5" stroke-linecap="round"/><circle cx="19" cy="19.3" r="3.8" stroke="#36404a" stroke-width="1.4"/><path d="M19 17.4V19.5L20.2 20.3" stroke="#36404a" stroke-width="1.2" stroke-linecap="round"/></svg><svg style="left:16px;top:260.5px;" width="24" height="24" viewBox="0 0 24 24" fill="none"><rect x="3.2" y="3.6" width="16.6" height="16.6" rx="2.8" stroke="#36404a" stroke-width="1.5"/><path d="M8.2 10.6L11.5 13.8L14.8 10.6" stroke="#36404a" stroke-width="1.5" stroke-linecap="round" stroke-linejoin="round"/></svg><svg style="left:15px;top:322.5px;" width="26" height="22" viewBox="0 0 26 22" fill="none"><path d="M8.8 4.6H21.8M8.8 11H21.8M8.8 17.4H21.8" stroke="#36404a" stroke-width="1.5" stroke-linecap="round"/><path d="M3.6 4.6h0.05M3.6 11h0.05M3.6 17.4h0.05" stroke="#36404a" stroke-width="1.9" stroke-linecap="round"/></svg><svg style="left:16px;top:383.5px;" width="24" height="26" viewBox="0 0 24 26" fill="none"><path d="M4 22.5V4.3C4 3.4 4.7 2.7 5.6 2.7H12.8L19.2 9.1V22.5" stroke="#36404a" stroke-width="1.5" stroke-linejoin="round"/><path d="M12.8 2.7V9.1H19.2" stroke="#36404a" stroke-width="1.5" stroke-linejoin="round"/></svg></div>
</body></html>
